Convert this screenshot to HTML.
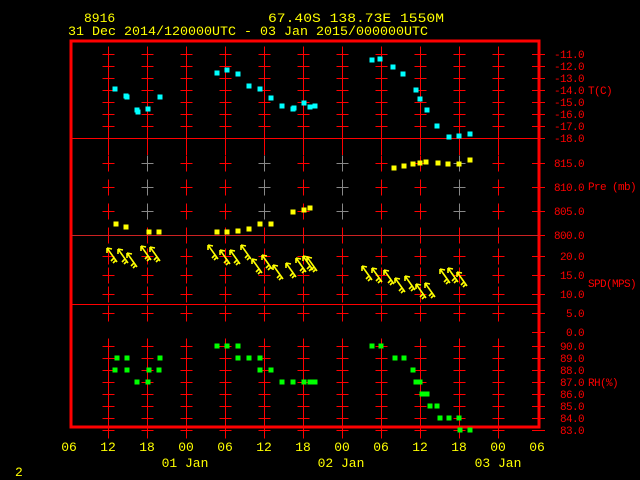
<!DOCTYPE html><html><head><style>body{margin:0;background:#000}svg{display:block}text{font-family:"Liberation Mono",monospace;font-size:13px}.s{font-size:11px;letter-spacing:-0.6px}</style></head><body>
<svg width="640" height="480" viewBox="0 0 640 480" xmlns="http://www.w3.org/2000/svg">
<rect width="640" height="480" fill="#000"/>
<g fill="#ff0">
<text x="84" y="22">8916</text>
<text x="268" y="22" textLength="176" lengthAdjust="spacingAndGlyphs">67.40S  138.73E  1550M</text>
<text x="68" y="35" textLength="360" lengthAdjust="spacingAndGlyphs">31 Dec 2014/120000UTC - 03 Jan 2015/000000UTC</text>
</g>
<g id="grid" stroke="#f00" stroke-width="1" fill="none" shape-rendering="crispEdges"></g>
<rect x="71" y="41" width="468" height="386" fill="none" stroke="#f00" stroke-width="3"/>
<g stroke="#f00" stroke-width="1" shape-rendering="crispEdges">
<line x1="71" y1="138.5" x2="539" y2="138.5"/>
<line x1="71" y1="304.5" x2="539" y2="304.5"/>
</g>
<line x1="71" y1="235.5" x2="539" y2="235.5" stroke="#c22" stroke-width="1" shape-rendering="crispEdges"/>
<g id="axis" fill="#f00" text-anchor="end"></g>
<g fill="#f00">
<text class="s" x="588" y="94">T(C)</text>
<text class="s" x="588" y="190">Pre (mb)</text>
<text class="s" x="588" y="287">SPD(MPS)</text>
<text class="s" x="588" y="386">RH(%)</text>
</g>
<g id="pts"></g>
<g id="bot" fill="#ff0" text-anchor="middle"></g>
<text x="15" y="476" fill="#ff0" font-size="12">2</text>
<script>
var NS="http://www.w3.org/2000/svg";
function el(p,t,a,tx){var e=document.createElementNS(NS,t);for(var k in a)e.setAttribute(k,a[k]);if(tx!==undefined)e.textContent=tx;document.getElementById(p).appendChild(e);return e;}
var xs=[108,147,186,225,264,303,342,381,420,459,498];
var ys=[];
for(var i=0;i<8;i++)ys.push(54+12*i);
var pys=[163,187,211];
var sys=[256,275,294,313];
var rys=[];for(var i=0;i<8;i++)rys.push(346+12*i);
var gray={147:1,264:1,342:1,459:1};
xs.forEach(function(x0){var x=x0+0.5;
 ys.concat(sys).concat(rys).concat([235]).forEach(function(y0){var y=y0+0.5;
  el("grid","line",{x1:x,y1:y-8,x2:x,y2:y+8});
  el("grid","line",{x1:x-6,y1:y,x2:x+6,y2:y});
 });
 pys.forEach(function(y0){var y=y0+0.5;
  var c=gray[x0]?"#888":"#f00";
  el("grid","line",{x1:x,y1:y-8,x2:x,y2:y+8,stroke:c});
  el("grid","line",{x1:x-6,y1:y,x2:x+6,y2:y,stroke:c});
 });
 el("grid","line",{x1:x,y1:146,x2:x,y2:155});
});
var all=ys.concat(pys).concat([235]).concat(sys).concat([332]).concat(rys);
all.forEach(function(y){el("grid","line",{x1:532,y1:y+0.5,x2:545,y2:y+0.5});});
function lab(t,y){el("axis","text",{x:584,y:y+4,"class":"s"},t);}
["-11.0","-12.0","-13.0","-14.0","-15.0","-16.0","-17.0","-18.0"].forEach(function(t,i){lab(t,ys[i]);});
["815.0","810.0","805.0","800.0"].forEach(function(t,i){lab(t,[163,187,211,235][i]);});
["20.0","15.0","10.0","5.0","0.0"].forEach(function(t,i){lab(t,[256,275,294,313,332][i]);});
["90.0","89.0","88.0","87.0","86.0","85.0","84.0","83.0"].forEach(function(t,i){lab(t,rys[i]);});
function sq(c,p){p.forEach(function(q){el("pts","rect",{x:q[0]-2.5,y:q[1]-2.5,width:5,height:5,fill:c});});}
sq("#0ff",[[115,89],[126,96],[127,97],[137,110],[138,112],[148,109],[160,97],[217,73],[227,70],[238,74],[249,86],[260,89],[271,98],[282,106],[293,109],[294,108],[304,103],[310,107],[315,106],[372,60],[380,59],[393,67],[403,74],[416,90],[420,99],[427,110],[437,126],[449,137],[459,136],[470,134]]);
sq("#ff0",[[116,224],[126,227],[149,232],[159,232],[217,232],[227,232],[238,231],[249,229],[260,224],[271,224],[293,212],[304,210],[310,208],[394,168],[404,166],[413,164],[420,163],[426,162],[438,163],[448,164],[459,164],[470,160]]);
var G=[];
[[358,[117,127,160]],[370,[115,127,149,159]],[382,[137,148]],[346,[217,227,238]],[358,[238,249,260]],[370,[260,271]],[382,[282,293,304,310,315]],[346,[372,381]],[358,[395,404]],[370,[413]],[382,[416,420]],[394,[422,427]],[406,[430,437]],[418,[440,449,459]],[430,[460,470]]].forEach(function(r){r[1].forEach(function(x){G.push([x,r[0]]);});});
sq("#0f0",G);
var W=[[107,248],[118,249],[127,253],[141,246],[150,247],[208,245],[220,250],[230,250],[241,245],[252,259],[262,255],[273,265],[286,263],[296,258],[303,256],[307,257],[362,266],[372,268],[384,270],[395,278],[405,276],[416,284],[425,283],[440,269],[448,268],[457,272]];
W.forEach(function(w){var x=w[0],y=w[1];
 el("pts","path",{d:"M"+x+" "+y+"L"+(x+10)+" "+(y+14)+"M"+x+" "+y+"l5 1M"+x+" "+y+"l0 5M"+(x+7)+" "+(y+10)+"l-3 3M"+(x+9)+" "+(y+12)+"l-3 3",stroke:"#ff0","stroke-width":1.6,fill:"none"});
});
var L=["06","12","18","00","06","12","18","00","06","12","18","00","06"];
L.forEach(function(t,i){el("bot","text",{x:69+39*i,y:451},t);});
[["01 Jan",185],["02 Jan",341],["03 Jan",498]].forEach(function(d){el("bot","text",{x:d[1],y:467},d[0]);});
</script>
</svg></body></html>
